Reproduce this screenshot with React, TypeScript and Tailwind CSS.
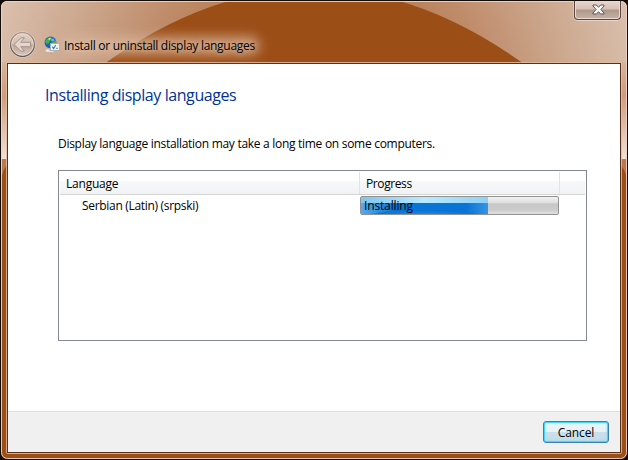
const FONT = "font-['Open_Sans','Noto_Sans',sans-serif]";

function GlassFrame() {
  return (
    <svg className="absolute inset-0" width="628" height="460" viewBox="0 0 628 460" aria-hidden="true">
      <defs>
        <radialGradient id="glass" gradientUnits="userSpaceOnUse" cx="314" cy="110" r="330">
          <stop offset="0" stopColor="#ad6b3c" />
          <stop offset="0.36" stopColor="#b67a4f" />
          <stop offset="0.55" stopColor="#c08e6d" />
          <stop offset="0.75" stopColor="#cba68c" />
          <stop offset="1" stopColor="#dac0ad" />
        </radialGradient>
        <linearGradient id="side" x1="0" y1="0" x2="0" y2="1">
          <stop offset="0" stopColor="#d5b39d" />
          <stop offset="0.35" stopColor="#cf9c7c" />
          <stop offset="1" stopColor="#efe0d8" />
        </linearGradient>
        <clipPath id="shell"><rect x="1" y="1" width="626" height="458" rx="6" /></clipPath>
      </defs>
      <rect width="628" height="460" fill="#130b08" />
      <g clipPath="url(#shell)">
        <rect width="628" height="460" fill="#9c4e17" />
        <rect width="628" height="64" fill="url(#glass)" />
        <path d="M104 64Q314 -87 524 64Z" fill="#9c4e17" />
        <rect y="62" width="8" height="97" fill="url(#side)" />
        <rect x="620" y="62" width="8" height="97" fill="url(#side)" />
        <path d="M0 159H8V164Q4 168 1 178H0ZM628 159H620V164Q624 168 627 178H628Z" fill="#ba7850" />
      </g>
      <rect x="1.5" y="1.5" width="625" height="457" rx="6" fill="none" stroke="#f0d5c4" strokeOpacity=".9" />
      <rect x="6.5" y="62.5" width="615" height="391" rx="1" fill="none" stroke="#e5bca0" strokeOpacity=".85" />
      <rect x="7.5" y="63.5" width="613" height="389" fill="none" stroke="#57301a" />
    </svg>
  );
}

function BackButton() {
  return (
    <svg className="shrink-0" width="28" height="28" viewBox="0 0 28 28">
      <defs>
        <linearGradient id="back" x1="0" y1="0" x2="0" y2="1">
          <stop offset="0" stopColor="#e3d3c9" />
          <stop offset=".48" stopColor="#d3bbae" />
          <stop offset=".52" stopColor="#baa497" />
          <stop offset="1" stopColor="#dcc9bd" />
        </linearGradient>
        <linearGradient id="ring" x1="0" y1="0" x2="0" y2="1">
          <stop offset="0" stopColor="#a99389" />
          <stop offset="1" stopColor="#4f4b4d" />
        </linearGradient>
      </defs>
      <circle cx="14.5" cy="14.5" r="13" fill="none" stroke="#e8d6cb" strokeOpacity=".6" />
      <circle cx="14.5" cy="14.5" r="11.9" fill="url(#back)" stroke="url(#ring)" strokeWidth="1.2" />
      <circle cx="14.5" cy="14.5" r="10.8" fill="none" stroke="#eee2da" strokeOpacity=".7" />
      <path d="M6 14.5L13 7.8H16.3L12.8 12.3H22.5V16.7H12.8L16.3 21.2H13Z" fill="#e4d4ca" stroke="#a08e85" strokeWidth=".9" strokeLinejoin="round" />
    </svg>
  );
}

function LanguageIcon() {
  return (
    <svg className="shrink-0" width="16" height="17" viewBox="0 0 16 17">
      <ellipse cx="6" cy="14.5" rx="4.5" ry="1.5" fill="#e9e8e5" />
      <path d="M4.5 11H8V15H4.5Z" fill="#c9cbcd" />
      <circle cx="6.5" cy="6.5" r="5.9" fill="#1c62bd" />
      <path d="M2 3.8Q4.2 1 7 1.3L8 3L6 4.5L5 7L2.5 8L1 6ZM8 6L11.7 4.2L12.2 7L9.8 9L7.5 8Z" fill="#3eb43b" />
      <path d="M4 2.6Q6 1.2 7.2 2.2L5 4.6Z" fill="#ace698" />
      <path d="M6.5 3.6L9.5 2.4L10.5 4.4L7.8 5.6Z" fill="#62b9f2" />
      <rect x="6.5" y="7.5" width="9" height="7" fill="#fff" stroke="#a4b1bd" />
      <path d="M8.3 10.7L9.6 12.5L11.8 9" fill="none" stroke="#2e7ec2" strokeWidth="1.3" />
      <path d="M12.2 12.3H14" stroke="#45779c" />
    </svg>
  );
}

function CloseButton() {
  return (
    <button aria-label="Close" className="absolute left-[574px] top-[1px] flex h-[19px] w-[47px] items-center justify-center rounded-b-[4px] border border-t-0 border-[#594640] bg-[linear-gradient(#e6d7cd_0%,#d6c0b3_45%,#ad968a_50%,#c8b2a5_100%)] shadow-[inset_0_0_0_1px_#eadbd2,0_1px_0_#ead7cc,1px_0_0_#dfc9bb,-1px_0_0_#dfc9bb]">
      <svg className="-mt-px ml-[2px]" width="13" height="11" viewBox="0 0 13 11">
        <path d="M1 1H4.4L6.5 3.3L8.6 1H12V2L8.9 5.5L12 9V10H8.6L6.5 7.7L4.4 10H1V9L4.1 5.5L1 2Z" fill="#fafafa" stroke="#535666" strokeLinejoin="round" />
      </svg>
    </button>
  );
}

function LanguageList() {
  return (
    <section className="ml-[50px] mt-[17px] h-[171px] w-[529px] border border-[#828790] bg-white text-[12px]">
      <div className="mx-px mt-px flex h-[23px] border-b border-[#d5d5d5] bg-[linear-gradient(#fff_0,#fff_9px,#f7f8fa_9px,#f1f2f4_22px)] leading-[24px]">
        <div className="w-[300px] border-r border-[#e2e3e5] pl-[6px]"><span className="inline-block tracking-[-0.22px]">Language</span></div>
        <div className="w-[200px] border-r border-[#e2e3e5] pl-[6px]"><span className="inline-block tracking-[-0.4px]">Progress</span></div>
      </div>
      <div className="flex h-[21px] pl-[23px] leading-[21px]">
        <span className="w-[278px] whitespace-nowrap tracking-[-0.31px]">Serbian (Latin) (srpski)</span>
        <div className="relative mt-px h-[19px] w-[199px] overflow-hidden rounded-[2px] border border-[#929292] bg-[linear-gradient(#f2f2f2_0%,#dedede_35%,#c7c7c7_40%,#cbcbcb_75%,#e0e0e0_100%)]">
          <div className="h-[17px] w-[127px] bg-[radial-gradient(ellipse_58px_6px_at_50%_110%,#2b91e6_0%,#0874d6_85%,transparent_100%),linear-gradient(90deg,#54abed_0,#0874d6_35px,#0874d6_105px,#3794e2_127px)]">
            <div className="h-[6px] bg-[linear-gradient(90deg,#81c6ee,#b9eaff_50%,#8ed1f5)]" />
          </div>
          <span className="absolute left-[3px] top-[-1px] leading-[19px] tracking-[-0.15px]">Installing</span>
        </div>
      </div>
    </section>
  );
}

export default function App() {
  return (
    <main className={`relative h-[460px] w-[628px] overflow-hidden text-black ${FONT}`}>
      <GlassFrame />
      <div className="relative flex h-full flex-col px-[8px] pb-[8px]">
        <header className="flex h-[64px] shrink-0 items-start pt-[30px]">
          <BackButton />
          <div className="ml-[8px] mt-[6px]"><LanguageIcon /></div>
          <div className="relative ml-[4px] mt-[5px]">
            <div className="absolute -inset-x-[5px] inset-y-px rounded-full bg-[#d9b69d]/70 blur-[6px]" />
            <h1 className="relative whitespace-nowrap text-[12px] leading-[21px] tracking-[-0.28px] [text-shadow:0_0_6px_#e9cbb8]">Install or uninstall display languages</h1>
          </div>
        </header>
        <div className="h-[347px] shrink-0 bg-white">
          <h2 className="ml-[37px] pt-[20px] text-[16px] leading-[22px] tracking-[-0.42px] text-[#003399]">Installing display languages</h2>
          <p className="ml-[50px] mt-[29px] whitespace-nowrap text-[12px] leading-[18px] tracking-[-0.29px]">Display language installation may take a long time on some computers.</p>
          <LanguageList />
        </div>
        <footer className="flex flex-1 items-start justify-end border-t border-[#dfdfdf] bg-[#f0f0f0] pr-[11px] pt-[9px]">
          <button className="h-[22px] w-[66px] rounded-[3px] border border-[#3c7fb1] bg-[linear-gradient(#edf5f9_0%,#e5f2f8_48%,#c9e0ec_52%,#c1dce9_100%)] text-[12px] leading-[19px] tracking-[-0.1px] shadow-[inset_0_0_0_1px_#42d7fc,inset_0_0_2px_1px_#70dffb]">Cancel</button>
        </footer>
      </div>
      <CloseButton />
    </main>
  );
}
